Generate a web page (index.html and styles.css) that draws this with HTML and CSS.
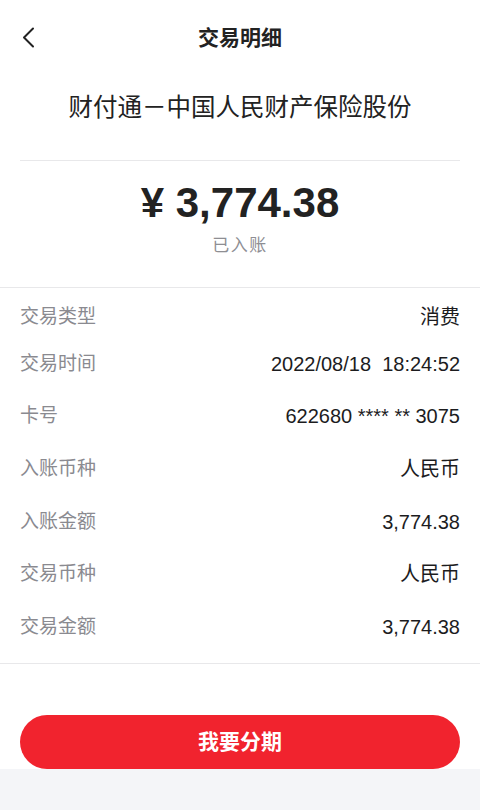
FILE: index.html
```html
<!DOCTYPE html>
<html lang="zh-CN">
<head>
  <meta charset="UTF-8">
  <meta name="viewport" content="width=device-width, initial-scale=1.0">
  <title>交易明细</title>
  <link rel="stylesheet" href="styles.css">
</head>
<body>
  <div class="page">
    <div class="header">
      <button class="back" aria-label="返回">
        <svg width="14" height="22" viewBox="0 0 14 22">
          <path d="M11 1.5 L2 10.5 L11 19.5" fill="none" stroke="#222" stroke-width="2" stroke-linecap="round" stroke-linejoin="round"/>
        </svg>
      </button>
      <div class="title">交易明细</div>
    </div>

    <div class="merchant">财付通－中国人民财产保险股份</div>

    <div class="summary">
      <div class="amount">¥ 3,774.38</div>
      <div class="status">已入账</div>
    </div>

    <div class="details">
      <div class="row first"><span class="label">交易类型</span><span class="value">消费</span></div>
      <div class="row"><span class="label">交易时间</span><span class="value">2022/08/18&nbsp;&nbsp;18:24:52</span></div>
      <div class="row"><span class="label">卡号</span><span class="value">622680 **** ** 3075</span></div>
      <div class="row"><span class="label">入账币种</span><span class="value">人民币</span></div>
      <div class="row"><span class="label">入账金额</span><span class="value">3,774.38</span></div>
      <div class="row"><span class="label">交易币种</span><span class="value">人民币</span></div>
      <div class="row"><span class="label">交易金额</span><span class="value">3,774.38</span></div>
    </div>

    <div class="actions">
      <button class="primary">我要分期</button>
    </div>
  </div>
</body>
</html>
```

FILE: styles.css
```css
body {
  margin: 0;
  background-color: #f4f5f8;
  font-family: "Liberation Sans", "Noto Sans CJK SC", sans-serif;
  color: #1c1c1e;
}
.page {
  background: white;
}
.header {
  height: 76px;
  display: flex;
  align-items: center;
  justify-content: center;
  position: relative;
}
.back {
  position: absolute;
  left: 22px;
  top: 27px;
  padding: 0;
  border: none;
  background: none;
  display: flex;
}
.title {
  font-size: 21px;
  line-height: 26px;
  font-weight: bold;
  color: #222;
}
.merchant {
  margin: 16px 20px 0;
  padding-bottom: 36px;
  line-height: 32px;
  font-size: 24.5px;
  text-align: center;
  color: #222;
  border-bottom: 1px solid #e8e8ea;
}
.summary {
  padding: 18px 0 30px;
  text-align: center;
  border-bottom: 1px solid #e8e8ea;
}
.amount {
  font-size: 42px;
  line-height: 48px;
  font-weight: bold;
  color: #222;
}
.status {
  margin-top: 8px;
  font-size: 17px;
  line-height: 22px;
  letter-spacing: 1.5px;
  color: #8e8e93;
}
.details {
  padding: 8px 20px 10px;
  border-bottom: 1px solid #e8e8ea;
}
.row {
  height: 52.6px;
  display: flex;
  align-items: center;
  justify-content: space-between;
  font-size: 19px;
  line-height: 24px;
}
.row.first {
  height: 41.6px;
}
.label {
  color: #8a8a90;
}
.value {
  font-size: 20px;
  color: #1c1c1e;
}
.actions {
  padding: 51px 20px 0;
}
.primary {
  display: block;
  width: 100%;
  height: 54px;
  border: none;
  border-radius: 27px;
  background-color: #f1232e;
  color: white;
  font-family: "Liberation Sans", "Noto Sans CJK SC", sans-serif;
  font-size: 21px;
  line-height: 26px;
  font-weight: bold;
  cursor: pointer;
}
```
